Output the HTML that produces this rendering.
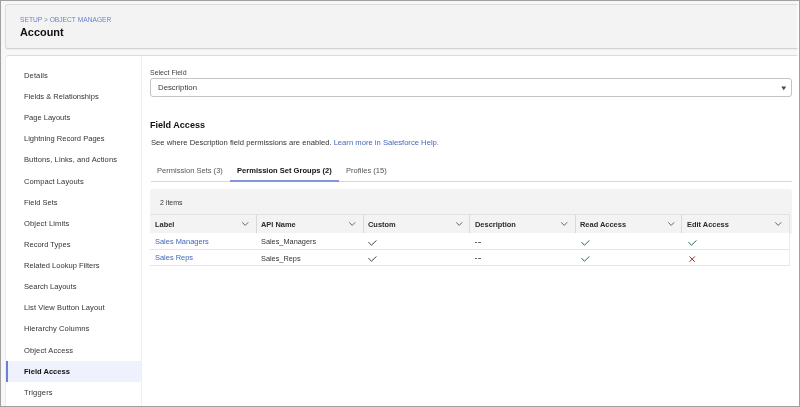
<!DOCTYPE html>
<html><head><meta charset="utf-8"><style>
html,body{margin:0;padding:0;}
body{width:800px;height:407px;position:relative;overflow:hidden;background:#f7f7f7;font-family:"Liberation Sans",sans-serif;}
.t{position:absolute;white-space:nowrap;line-height:1;will-change:transform;}
#rcol{position:absolute;left:797px;top:0;width:2px;height:407px;background:rgba(255,255,255,0.65);z-index:49;}
#frame{position:absolute;left:0;top:0;width:798px;height:405px;border:1px solid #a0a0a0;z-index:50;pointer-events:none;}
#hdr{position:absolute;left:5px;top:4px;width:800px;height:43px;background:#f3f3f3;border:1px solid #dcdcdc;border-bottom-color:#d2d2d2;border-radius:3px;box-shadow:0 1px 1px rgba(0,0,0,0.04);}
#main{position:absolute;left:5px;top:55px;width:800px;height:360px;background:#fff;border:1px solid #ececec;border-top-color:#dcdcdc;border-radius:4px;}
#sidediv{position:absolute;left:140.5px;top:56px;width:1px;height:352px;background:#efefef;}
#sel{position:absolute;left:6px;width:134.5px;height:20.6px;background:#eff2fd;border-left:2px solid #6a7ee0;box-sizing:border-box;}
#sel-box{position:absolute;left:150px;top:78px;width:641.5px;height:18.6px;box-sizing:border-box;border:1px solid #c4c4c4;border-radius:3px;background:#fff;}
#tabline{position:absolute;left:150.5px;top:180.8px;width:641px;height:1px;background:#d8d8d8;}
#tabact{position:absolute;left:230.3px;top:179.8px;width:109px;height:2px;background:#8594dc;}
#tcard{position:absolute;left:150px;top:188.5px;width:642px;height:45px;background:#f3f3f3;border-radius:3px 3px 0 0;}
#thead{position:absolute;left:150px;top:214px;width:640px;height:19.5px;background:#f3f3f3;border-top:1px solid #e2e2e2;border-bottom:1px solid #e2e2e2;border-right:1px solid #e2e2e2;box-sizing:border-box;}
.vdiv{position:absolute;top:215px;width:1px;height:17.5px;background:#dadada;}
.dash{position:absolute;width:2.7px;height:1px;background:#666;}
.hrow{position:absolute;left:150px;width:640px;height:1px;background:#e6e6e6;}
#rows{position:absolute;left:150px;top:233px;width:640px;height:33px;background:#fff;border-right:1px solid #ececec;box-sizing:border-box;}
</style></head><body>
<div id="frame"></div><div id="rcol"></div>
<div id="hdr"></div>
<div class="t" style="left:19.80px;top:17.16px;font-size:6.66px;color:#6884d2;font-weight:normal;">SETUP <span style="color:#8a8a8a">&gt;</span> OBJECT MANAGER</div>
<div class="t" style="left:20.20px;top:27.27px;font-size:10.9px;color:#111;font-weight:bold;">Account</div>
<div id="main"></div>
<div id="sidediv"></div>
<div class="t" style="left:24.00px;top:72.01px;font-size:7.55px;color:#333;font-weight:normal;letter-spacing:0.12px">Details</div>
<div class="t" style="left:24.00px;top:93.13px;font-size:7.55px;color:#333;font-weight:normal;">Fields &amp; Relationships</div>
<div class="t" style="left:24.00px;top:114.25px;font-size:7.55px;color:#333;font-weight:normal;">Page Layouts</div>
<div class="t" style="left:24.00px;top:135.37px;font-size:7.55px;color:#333;font-weight:normal;">Lightning Record Pages</div>
<div class="t" style="left:24.00px;top:156.49px;font-size:7.55px;color:#333;font-weight:normal;letter-spacing:0.09px">Buttons, Links, and Actions</div>
<div class="t" style="left:24.00px;top:177.61px;font-size:7.55px;color:#333;font-weight:normal;letter-spacing:0.07px">Compact Layouts</div>
<div class="t" style="left:24.00px;top:198.73px;font-size:7.55px;color:#333;font-weight:normal;">Field Sets</div>
<div class="t" style="left:24.00px;top:219.85px;font-size:7.55px;color:#333;font-weight:normal;letter-spacing:0.14px">Object Limits</div>
<div class="t" style="left:24.00px;top:240.97px;font-size:7.55px;color:#333;font-weight:normal;">Record Types</div>
<div class="t" style="left:24.00px;top:262.09px;font-size:7.55px;color:#333;font-weight:normal;">Related Lookup Filters</div>
<div class="t" style="left:24.00px;top:283.21px;font-size:7.55px;color:#333;font-weight:normal;">Search Layouts</div>
<div class="t" style="left:24.00px;top:304.33px;font-size:7.55px;color:#333;font-weight:normal;letter-spacing:0.085px">List View Button Layout</div>
<div class="t" style="left:24.00px;top:325.45px;font-size:7.55px;color:#333;font-weight:normal;letter-spacing:0.07px">Hierarchy Columns</div>
<div class="t" style="left:24.00px;top:346.57px;font-size:7.55px;color:#333;font-weight:normal;letter-spacing:0.11px">Object Access</div>
<div id="sel" style="top:361.3px"></div>
<div class="t" style="left:24.00px;top:367.69px;font-size:7.55px;color:#111;font-weight:bold;">Field Access</div>
<div class="t" style="left:24.00px;top:388.81px;font-size:7.55px;color:#333;font-weight:normal;letter-spacing:0.17px">Triggers</div>
<div class="t" style="left:150.20px;top:68.87px;font-size:7.0px;color:#444;font-weight:normal;">Select Field</div>
<div id="sel-box"></div>
<div class="t" style="left:158.00px;top:84.20px;font-size:7.8px;color:#3a3a3a;font-weight:normal;">Description</div>
<svg style="position:absolute;left:780.6px;top:85.6px" width="6" height="5" viewBox="0 0 6 5"><path d="M0.3 0.5 L5.2 0.5 L2.75 4.2 Z" fill="#4a4a4a"/></svg>
<div class="t" style="left:150.30px;top:121.24px;font-size:9.05px;color:#111;font-weight:bold;">Field Access</div>
<div class="t" style="left:150.60px;top:139.32px;font-size:7.65px;color:#333;font-weight:normal;">See where Description field permissions are enabled. <span style="color:#4268b8">Learn more in Salesforce Help.</span></div>
<div class="t" style="left:157.00px;top:167.41px;font-size:7.55px;color:#555;font-weight:normal;">Permission Sets (3)</div>
<div class="t" style="left:237.30px;top:167.41px;font-size:7.55px;color:#111;font-weight:bold;">Permission Set Groups (2)</div>
<div class="t" style="left:346.20px;top:167.41px;font-size:7.55px;color:#555;font-weight:normal;">Profiles (15)</div>
<div id="tabline"></div><div id="tabact"></div>
<div id="tcard"></div>
<div class="t" style="left:159.50px;top:199.47px;font-size:7.0px;color:#3a3a3a;font-weight:normal;">2 items</div>
<div id="thead"></div>
<div class="t" style="left:154.80px;top:220.99px;font-size:7.45px;color:#2b2b2b;font-weight:bold;">Label</div>
<svg style="position:absolute;left:241.30px;top:221.2px" width="8" height="6" viewBox="0 0 8 6"><path d="M1.2 1.3 L4.2 4.4 L7.2 1.3" fill="none" stroke="#606060" stroke-width="0.95"/></svg>
<div class="t" style="left:261.30px;top:220.99px;font-size:7.45px;color:#2b2b2b;font-weight:bold;">API Name</div>
<svg style="position:absolute;left:348.20px;top:221.2px" width="8" height="6" viewBox="0 0 8 6"><path d="M1.2 1.3 L4.2 4.4 L7.2 1.3" fill="none" stroke="#606060" stroke-width="0.95"/></svg>
<div class="vdiv" style="left:256px"></div>
<div class="t" style="left:368.20px;top:220.99px;font-size:7.45px;color:#2b2b2b;font-weight:bold;">Custom</div>
<svg style="position:absolute;left:454.80px;top:221.2px" width="8" height="6" viewBox="0 0 8 6"><path d="M1.2 1.3 L4.2 4.4 L7.2 1.3" fill="none" stroke="#606060" stroke-width="0.95"/></svg>
<div class="vdiv" style="left:363px"></div>
<div class="t" style="left:474.80px;top:220.99px;font-size:7.45px;color:#2b2b2b;font-weight:bold;">Description</div>
<svg style="position:absolute;left:560.40px;top:221.2px" width="8" height="6" viewBox="0 0 8 6"><path d="M1.2 1.3 L4.2 4.4 L7.2 1.3" fill="none" stroke="#606060" stroke-width="0.95"/></svg>
<div class="vdiv" style="left:469px"></div>
<div class="t" style="left:580.40px;top:220.99px;font-size:7.45px;color:#2b2b2b;font-weight:bold;">Read Access</div>
<svg style="position:absolute;left:666.60px;top:221.2px" width="8" height="6" viewBox="0 0 8 6"><path d="M1.2 1.3 L4.2 4.4 L7.2 1.3" fill="none" stroke="#606060" stroke-width="0.95"/></svg>
<div class="vdiv" style="left:575px"></div>
<div class="t" style="left:686.60px;top:220.99px;font-size:7.45px;color:#2b2b2b;font-weight:bold;">Edit Access</div>
<svg style="position:absolute;left:774.30px;top:221.2px" width="8" height="6" viewBox="0 0 8 6"><path d="M1.2 1.3 L4.2 4.4 L7.2 1.3" fill="none" stroke="#606060" stroke-width="0.95"/></svg>
<div class="vdiv" style="left:681px"></div>
<div id="rows"></div>
<div class="hrow" style="top:249px"></div><div class="hrow" style="top:265px"></div>
<div class="t" style="left:155.00px;top:238.39px;font-size:7.45px;color:#4268b8;font-weight:normal;">Sales Managers</div>
<div class="t" style="left:261.40px;top:238.48px;font-size:7.35px;color:#333;font-weight:normal;">Sales_Managers</div>
<svg style="position:absolute;left:368.20px;top:240.00px" width="10" height="7" viewBox="0 0 10 7"><path d="M0.4 2.1 L3.4 5.2 L8.5 0.4" fill="none" stroke="#3e3e3c" stroke-width="0.95"/></svg>
<div class="dash" style="left:474.8px;top:242px"></div><div class="dash" style="left:478.3px;top:242px"></div>
<svg style="position:absolute;left:581.00px;top:240.00px" width="10" height="7" viewBox="0 0 10 7"><path d="M0.4 2.1 L3.4 5.2 L8.5 0.4" fill="none" stroke="#20693f" stroke-width="0.95"/></svg>
<svg style="position:absolute;left:687.90px;top:240.00px" width="10" height="7" viewBox="0 0 10 7"><path d="M0.4 2.1 L3.4 5.2 L8.5 0.4" fill="none" stroke="#20693f" stroke-width="0.95"/></svg>
<div class="t" style="left:155.00px;top:254.49px;font-size:7.45px;color:#4268b8;font-weight:normal;">Sales Reps</div>
<div class="t" style="left:261.40px;top:254.58px;font-size:7.35px;color:#333;font-weight:normal;">Sales_Reps</div>
<svg style="position:absolute;left:368.20px;top:255.60px" width="10" height="7" viewBox="0 0 10 7"><path d="M0.4 2.1 L3.4 5.2 L8.5 0.4" fill="none" stroke="#3e3e3c" stroke-width="0.95"/></svg>
<div class="dash" style="left:474.8px;top:258px"></div><div class="dash" style="left:478.3px;top:258px"></div>
<svg style="position:absolute;left:581.00px;top:255.60px" width="10" height="7" viewBox="0 0 10 7"><path d="M0.4 2.1 L3.4 5.2 L8.5 0.4" fill="none" stroke="#20693f" stroke-width="0.95"/></svg>
<svg style="position:absolute;left:688.90px;top:255.80px" width="7" height="7" viewBox="0 0 7 7"><path d="M0.5 0.5 L5.8 5.8 M5.8 0.5 L0.5 5.8" fill="none" stroke="#ad2a2a" stroke-width="1.0"/></svg>
</body></html>
